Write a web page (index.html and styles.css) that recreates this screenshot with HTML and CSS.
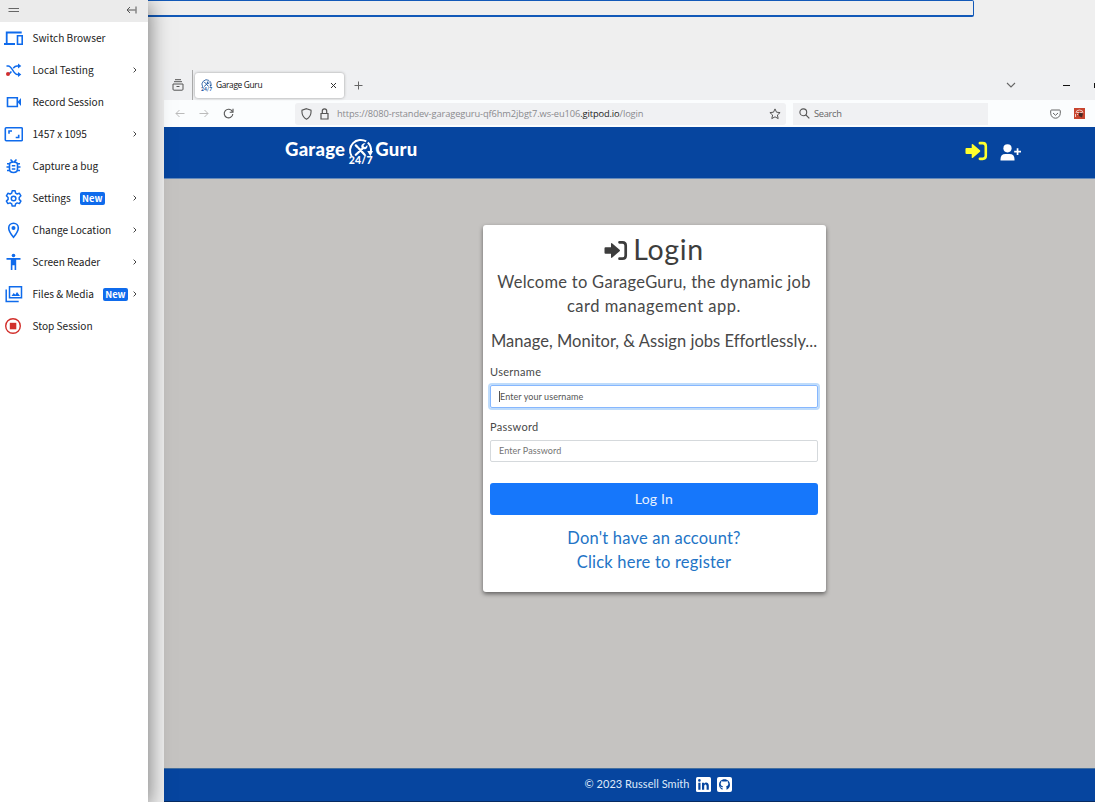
FILE: index.html
```
<!DOCTYPE html>
<html lang="en">
<head>
<meta charset="utf-8">
<title>Garage Guru</title>
<link rel="stylesheet" href="styles.css">
</head>
<body>
<svg class="defs" width="0" height="0">
  <symbol id="chev" viewBox="0 0 6 8"><path d="M1.6 1.600 4 4 1.600 6.400" fill="none" stroke="#444" stroke-width="1"/></symbol>
  <symbol id="login" viewBox="0 0 24 20"><path d="M1.5 6.8H7V3.5Q7 2 8.3 3L15.6 9.2Q16.4 10 15.6 10.8L8.3 17Q7 18 7 16.500V13.200H1.500Q.5 13.200.5 12.200V7.800Q.5 6.800 1.500 6.800Z" fill="currentColor"/><path d="M15.500 1.800H18.500Q21.700 1.800 21.700 5V15Q21.700 18.200 18.500 18.200H15.500" fill="none" stroke="currentColor" stroke-width="2.700" stroke-linecap="round"/></symbol>
  <symbol id="emblem" viewBox="0 0 24 20"><path d="M3.500 17.500A10.300 10.300 0 0 1 17.500 3.200M19 4.200A10.300 10.300 0 0 1 22 13" fill="none" stroke="currentColor" stroke-width="1.900"/><path d="M18.500 12.500h5.500l-2.500 5z" fill="currentColor"/><path d="m7.500 7 2 2M10.500 10l5.500 6M7.500 16l6.500-6" fill="none" stroke="currentColor" stroke-width="2.200" stroke-linecap="round"/><path d="M16.800 5 14.900 7.200l.4 1.200 1.300.2 1.900-2c.8 2-.7 4.500-3.100 4.200-2.300-.3-3.300-2.500-2.200-4.300.8-1.300 2.200-1.900 3.600-1.500Z" fill="currentColor"/></symbol>
</svg>
<div class="app">
  <aside class="sidebar">
    <div class="side-head">
      <svg width="12" height="6" viewBox="0 0 12 6"><path d="M.5 1.500h10.500M.5 4.500h10.500" stroke="#666" stroke-width="1.200"/></svg>
      <svg width="11" height="8" viewBox="0 0 11 8"><path d="M1 4h8.500M4 1 1 4l3 3M10 .5v7" fill="none" stroke="#555" stroke-width="1"/></svg>
    </div>
    <ul class="menu">
      <li><svg class="ico" viewBox="0 0 20 18"><path d="M3.700 14V3.500h15M1 15h11" fill="none" stroke="#0f6bec" stroke-width="1.800"/><path d="M14.500 6.700h4.700v8.500h-4.700z" fill="none" stroke="#0f6bec" stroke-width="1.600"/></svg><span class="t">Switch Browser</span></li>
      <li><svg class="ico" viewBox="0 0 20 18"><path d="M3.500 5h1.700c4 0 5.300 8.500 9 8.500h1.500M10.300 7.200C11.500 5.700 12 5 14 5h1.700M5 12.800c1.500 0 2.500-.9 3.400-2.300" fill="none" stroke="#0f6bec" stroke-width="1.500"/><path d="m15 2.500 3.300 2.500L15 7.500zM15 11l3.300 2.500L15 16z" fill="#0f6bec"/><circle cx="5" cy="13" r="2" fill="#d22d2d"/></svg><span class="t">Local Testing</span><svg class="chev"><use href="#chev"/></svg></li>
      <li><svg class="ico" viewBox="0 0 20 18"><path d="M4.500 4.700h9.800v8.800H4.500z" fill="none" stroke="#0f6bec" stroke-width="1.600"/><path d="M14.500 9 18 5v8z" fill="#0f6bec"/></svg><span class="t">Record Session</span></li>
      <li><svg class="ico" viewBox="0 0 20 18"><rect x="2.300" y="2.800" width="17" height="12.900" rx="1" fill="none" stroke="#0f6bec" stroke-width="1.600"/><path d="M6 8.800V6h3M15.700 9.700v2.800h-3" fill="none" stroke="#0f6bec" stroke-width="1.600"/></svg><span class="t">1457 x 1095</span><svg class="chev"><use href="#chev"/></svg></li>
      <li><svg class="ico" viewBox="0 0 20 18"><path d="M6.500 7.500Q6.500 5 10.500 5t4 2.500V12q0 3.500-4 3.500T6.500 12zM7.500 2.500l2 2M13.500 2.500l-2 2M4 6.700h2.500M14.500 6.700H17M3.500 10h3M14.500 10h3M4 13.500h2.700M14.300 13.500H17M8.800 8.700h3.500M8.800 12h3.500" fill="none" stroke="#0f6bec" stroke-width="1.600"/></svg><span class="t">Capture a bug</span></li>
      <li><svg class="ico" viewBox="0 0 20 18"><path d="m9.200 1.800-.5 2.300-1.600.9-2.200-.7-1.500 2.500 1.700 1.700v1.900l-1.700 1.700 1.500 2.500 2.200-.7 1.600.9.500 2.300h2.900l.5-2.300 1.600-.9 2.200.7 1.500-2.500-1.700-1.700V8.500l1.700-1.700-1.500-2.500-2.200.7-1.600-.9-.5-2.300z" fill="none" stroke="#0f6bec" stroke-width="1.500" stroke-linejoin="round"/><circle cx="10.600" cy="9.500" r="2.300" fill="none" stroke="#0f6bec" stroke-width="1.500"/></svg><span class="t">Settings</span><b class="new">New</b><svg class="chev"><use href="#chev"/></svg></li>
      <li><svg class="ico" viewBox="0 0 20 18"><path d="M10.500 16.300C7.500 12.700 5.700 9.700 5.700 7a4.800 4.800 0 0 1 9.600 0c0 2.700-1.800 5.700-4.800 9.300Z" fill="none" stroke="#0f6bec" stroke-width="1.600"/><circle cx="10.500" cy="7" r="2" fill="#0f6bec"/></svg><span class="t">Change Location</span><svg class="chev"><use href="#chev"/></svg></li>
      <li><svg class="ico" viewBox="0 0 20 18"><circle cx="10.500" cy="2.500" r="1.800" fill="#0f6bec"/><path d="M3.500 5h14v1.700h-4.300V17h-1.600v-4.800H9.400V17H7.800V6.700H3.500z" fill="#0f6bec"/></svg><span class="t">Screen Reader</span><svg class="chev"><use href="#chev"/></svg></li>
      <li><svg class="ico" viewBox="0 0 20 18"><path d="M6.500 1.800h12v11h-12zM3.200 4.500v12h12.500" fill="none" stroke="#0f6bec" stroke-width="1.500"/><path d="m8.500 11 2.200-3 1.600 1.800L14 7l3 4z" fill="#0f6bec"/></svg><span class="t">Files &amp; Media</span><b class="new">New</b><svg class="chev"><use href="#chev"/></svg></li>
      <li><svg class="ico" viewBox="0 0 20 18"><circle cx="10" cy="9" r="7.300" fill="none" stroke="#d22f2b" stroke-width="1.400"/><path d="M6.800 5.800h6.500v6.500H6.800z" fill="#d22f2b"/></svg><span class="t">Stop Session</span></li>
    </ul>
  </aside>
  <main class="stage">
    <div class="focus-box"></div>
    <div class="browser">
      <div class="tabs">
        <div class="recent"><svg width="12" height="12" viewBox="0 0 12 12"><path d="M3 .7h6M2 2.700h8M1 5h10v5.200q0 1-1 1H2q-1 0-1-1zM4.500 7.500h3" fill="none" stroke="#555" stroke-width="1"/></svg></div>
        <div class="tab"><span class="fav"><svg width="11" height="9"><use href="#emblem"/></svg><i>24/7</i></span><span class="tab-title">Garage Guru</span><svg width="7" height="7" viewBox="0 0 7 7"><path d="m1 1 5 5M6 1 1 6" stroke="#333"/></svg></div>
        <svg class="plus" width="9" height="9" viewBox="0 0 9 9"><path d="M4.500.5v8M.5 4.500h8" stroke="#666"/></svg>
        <svg class="down" width="10" height="6" viewBox="0 0 10 6"><path d="m1 1 4 4 4-4" fill="none" stroke="#666" stroke-width="1.100"/></svg>
        <span class="mini"></span><span class="max"></span>
      </div>
      <div class="tools">
        <svg class="back" width="10" height="9" viewBox="0 0 10 9"><path d="M9.500 4.500H1M4.500 1 1 4.500 4.500 8" fill="none" stroke="#bbb"/></svg>
        <svg class="fwd" width="10" height="9" viewBox="0 0 10 9"><path d="M.5 4.500H9M5.500 1 9 4.500 5.500 8" fill="none" stroke="#bbb"/></svg>
        <svg class="reload" width="11" height="11" viewBox="0 0 11 11"><path d="M9.300 3.500A4.300 4.300 0 1 0 9.800 6M10 .8v3.400H6.700" fill="none" stroke="#555" stroke-width="1.100"/></svg>
        <div class="url">
          <svg width="11" height="12" viewBox="0 0 11 12"><path d="M5.500.7 10 2.200c.4 4-1 7.200-4.500 9C2 9.400.6 6.200 1 2.200Z" fill="none" stroke="#555" stroke-width="1.100"/></svg>
          <svg class="lock" width="9" height="12" viewBox="0 0 9 12"><path d="M1 5.500h7v5.500H1zM2.300 5.500V3a2.200 2.200 0 0 1 4.400 0v2.500" fill="none" stroke="#555" stroke-width="1.200"/></svg>
          <span class="address">https://8080-rstandev-garageguru-qf6hm2jbgt7.ws-eu106<b>.gitpod.io</b>/login</span>
          <svg class="star" width="12" height="12" viewBox="0 0 12 12"><path d="m6 .9 1.500 3.300 3.600.4-2.700 2.400.8 3.600L6 8.800l-3.200 1.800.8-3.600L.9 4.600l3.600-.4z" fill="none" stroke="#555"/></svg>
        </div>
        <div class="search"><svg width="11" height="11" viewBox="0 0 11 11"><circle cx="4.300" cy="4.300" r="3.400" fill="none" stroke="#555" stroke-width="1.100"/><path d="m6.800 6.800 3.500 3.500" stroke="#555" stroke-width="1.200"/></svg><span>Search</span></div>
        <svg class="pocket" width="11" height="10" viewBox="0 0 11 10"><path d="M1.500 1h8q.8 0 .8 1v2.500C10 7.400 8 9.200 5.500 9.200S1 7.400.7 4.500V2q0-1 .8-1ZM3 4l2.500 2.300L8 4" fill="none" stroke="#666" stroke-width="1"/></svg>
        <svg class="ext" width="11" height="11" viewBox="0 0 11 11"><path d="M0 0h11v11H0z" fill="#c8452f"/><path d="M2 5q0-3 3.500-3T9 5M3 4.500h5M1.500 6v3M3.500 6v1" fill="none" stroke="#f0c8bf"/><path d="M5 4.500 9 5.500 8 9.500 5 8z" fill="#4a2a26"/></svg>
      </div>
      <header class="nav">
        <div class="brand"><span>Garage</span><span class="emblem"><svg width="25" height="21"><use href="#emblem"/></svg><em>24/7</em></span><span>Guru</span></div>
        <div class="nav-links">
          <svg class="signin" width="23" height="20"><use href="#login"/></svg>
          <svg width="21" height="17" viewBox="0 0 21 17"><circle cx="7.500" cy="4.300" r="4.100" fill="#fff"/><path d="M.5 16.500v-1.300Q.5 10 5.500 10h4q5 0 5 5.200v1.300zM16.700 4.300h1.700v2.500H21v1.700h-2.600V11h-1.700V8.500h-2.500V6.800h2.500z" fill="#fff"/></svg>
        </div>
      </header>
      <section class="page">
        <form class="card">
          <h1><svg width="24" height="21"><use href="#login"/></svg><span>Login</span></h1>
          <p class="lead"><span class="w1">Welcome to GarageGuru, the dynamic job</span><br><span class="w2">card management app.</span></p>
          <p class="lead tag">Manage, Monitor, &amp; Assign jobs Effortlessly...</p>
          <label class="user">Username</label>
          <div class="field active"><span>Enter your username</span></div>
          <label class="pass">Password</label>
          <div class="field"><span>Enter Password</span></div>
          <div class="button">Log In</div>
          <a class="register">Don't have an account?<br>Click here to register</a>
        </form>
      </section>
      <footer class="foot"><span>© 2023 Russell Smith</span>
        <svg width="15" height="15" viewBox="0 0 15 15"><rect width="15" height="15" rx="1.500" fill="#fff"/><path d="M2.300 5.800h2.200v7H2.300zM6 5.800h2v1c1.200-2 4.800-1.500 4.800 1.800v4.200h-2.200V9c0-2.200-2.400-2-2.400 0v3.800H6z" fill="#06459f"/><circle cx="3.400" cy="3.400" r="1.300" fill="#06459f"/></svg>
        <svg width="15" height="15" viewBox="0 0 15 15"><rect width="15" height="15" rx="2" fill="#fff"/><path d="M5.500 12.700C3.400 12 2 10.200 2 7.800 2 4.600 4.400 2.200 7.500 2.200S13 4.600 13 7.800c0 2.400-1.400 4.200-3.500 4.900v-2.200c0-.6-.2-.9-.5-1.200 1.800-.3 2.500-1.300 2.300-3.100l-.6-1.100V4L9.200 4.500H5.800L4.300 4v1.100l-.6 1.100c-.2 1.800.5 2.800 2.300 3.100l-.4 1c-1 .3-1.300-.2-1.900-.8l-.5.3c.7 1 1.200 1.500 2.300 1.300z" fill="#06459f"/></svg>
      </footer>
    </div>
  </main>
</div>
</body>
</html>
```
FILE: styles.css
```
* { box-sizing: border-box; }
body { margin: 0; background: #efefef; overflow: hidden; }
svg { display: block; flex: none; }
.defs { position: absolute; }
.app { display: flex; width: 1095px; height: 802px; }
.sidebar { width: 148px; flex: none; background: #fff; position: relative; z-index: 2; box-shadow: 1px 4px 20px rgba(0,0,0,.5); font: 10.100px/32px "Noto Sans CJK SC", sans-serif; color: #222; }
.side-head { height: 22px; background: #ebebeb; display: flex; align-items: center; justify-content: space-between; padding: 0 11px 2px 8px; }
.menu { list-style: none; margin: 0; padding: 0; }
.menu li { height: 32px; display: flex; align-items: center; padding: 0 10px 0 3px; white-space: nowrap; }
.ico { width: 20px; height: 18px; margin-right: 9.500px; }
.chev { width: 6px; height: 8px; margin-left: auto; }
.new { font: bold 9.300px/12px "Noto Sans CJK SC", sans-serif; background: #0f6bec; color: #fff; width: 25px; height: 13px; text-align: center; border-radius: 2px; margin: 1px 0 0 9px; }
.stage { flex: 1; min-width: 0; }
.focus-box { width: 826px; height: 17px; border: 1px solid #1259b8; border-bottom-width: 2px; border-left: 0; border-radius: 0 2px 2px 0; }
.browser { margin: 53px 0 0 16px; width: 931px; font-family: "Open Sans", sans-serif; }
.tabs { height: 30px; background: #eff0f2; display: flex; align-items: center; }
.recent { width: 29px; height: 30px; border-right: 1px solid #aaa; display: flex; align-items: center; padding-left: 8px; }
.tab { width: 149px; height: 25px; margin-left: 2px; padding: 0 7px 0 6px; background: #fff; border-radius: 3px; box-shadow: 0 0 3px #999; display: flex; align-items: center; }
.tab-title { flex: 1; margin-left: 4px; font: 8.400px/12px "Open Sans", sans-serif; color: #111; letter-spacing: -.350px; }
.fav { color: #1c559f; width: 11px; }
.fav i { display: block; font: bold 5px/3px Lato, sans-serif; text-align: center; }
.plus { margin-left: 10px; }
.down { margin-left: 643px; }
.mini { width: 7px; height: 1px; background: #111; margin-left: 47px; }
.max { width: 1px; height: 5px; background: #111; margin-left: 24px; }
.tools { height: 27px; background: #fbfdfe; display: flex; align-items: center; }
.back { margin-left: 11px; }
.fwd { margin-left: 14px; }
.reload { margin-left: 14px; }
.url { width: 491px; height: 22px; margin-left: 61px; background: #f0f1f3; border-radius: 3px; display: flex; align-items: center; padding: 0 5px 0 6px; }
.lock { margin-left: 8px; }
.address { margin-left: 8px; font-size: 9.300px; letter-spacing: -.110px; color: #8a8a8e; white-space: nowrap; }
.address b { font-weight: 400; color: #222; }
.star { margin-left: auto; }
.search { width: 195px; height: 22px; margin-left: 7px; padding-left: 6px; background: #f0f1f3; display: flex; align-items: center; gap: 4px; font-size: 9.300px; letter-spacing: -.300px; color: #666; }
.pocket { margin-left: 62px; }
.ext { margin-left: 13px; }
.nav { height: 52px; background: #06459f; border-bottom: 1px solid #668bbb; display: flex; justify-content: space-between; padding: 0 74px 0 121px; }
.brand { display: flex; color: #fff; font: 900 18.500px/44px Lato, sans-serif; letter-spacing: .250px; }
.emblem { width: 25px; margin: 11px 2px 0 3px; }
.emblem em { display: block; font: normal 900 10.500px/9px Lato, sans-serif; margin-top: -3px; text-align: center; }
.nav-links { display: flex; align-items: center; gap: 12px; padding-bottom: 1px; }
.signin { color: #ffff2c; margin-bottom: 3px; }
.page { height: 589px; background: #c5c3c1; padding: 46px 0 0 318.500px; }
.card { width: 343px; height: 367px; padding: 5px 7.500px 0; background: #fff; border-radius: 3px; box-shadow: 0 2px 4px rgba(0,0,0,.5); font-family: Lato, sans-serif; color: #484848; text-align: center; white-space: nowrap; }
.card h1 { margin: 0; height: 40px; display: flex; justify-content: center; align-items: flex-start; gap: 5px; font: 400 28.500px/38px Lato, sans-serif; letter-spacing: .700px; color: #3d3d3d; }
.card h1 svg { margin-top: 10px; }
.lead { margin: 0; font-size: 16.500px; line-height: 24px; }
.w1 { letter-spacing: .280px; }
.w2 { letter-spacing: .520px; }
.tag { margin-top: 11px; letter-spacing: .030px; }
.card label { display: block; text-align: left; font-size: 11px; line-height: 16px; letter-spacing: .300px; }
.user { margin-top: 11px; }
.field { height: 22px; border: 1px solid #d5d9dc; border-radius: 2px; text-align: left; padding-left: 8px; margin-top: 5px; font-size: 9px; line-height: 20px; letter-spacing: .080px; color: #747474; }
.field.active { height: 23px; line-height: 22px; border-color: #86b7fe; box-shadow: 0 0 0 2px #bfdcfb; color: #555; }
.active span { border-left: 1px solid #555; }
.card .pass { margin-top: 11px; }
.button { margin-top: 21px; height: 32px; background: #1677fb; color: #e8f1ff; border-radius: 3px; font-size: 14px; line-height: 32px; letter-spacing: .200px; }
.register { display: block; margin-top: 11px; font-size: 16.500px; line-height: 24px; letter-spacing: .200px; color: #2374c6; }
.foot { height: 35px; background: #06459f; border-top: 1px solid #446f9f; border-bottom: 2px solid #062b62; display: flex; align-items: center; justify-content: center; gap: 6px; color: #dfe9fa; font: 11px/16px Lato, sans-serif; letter-spacing: .050px; padding: 0 0 2px 57px; }
```
